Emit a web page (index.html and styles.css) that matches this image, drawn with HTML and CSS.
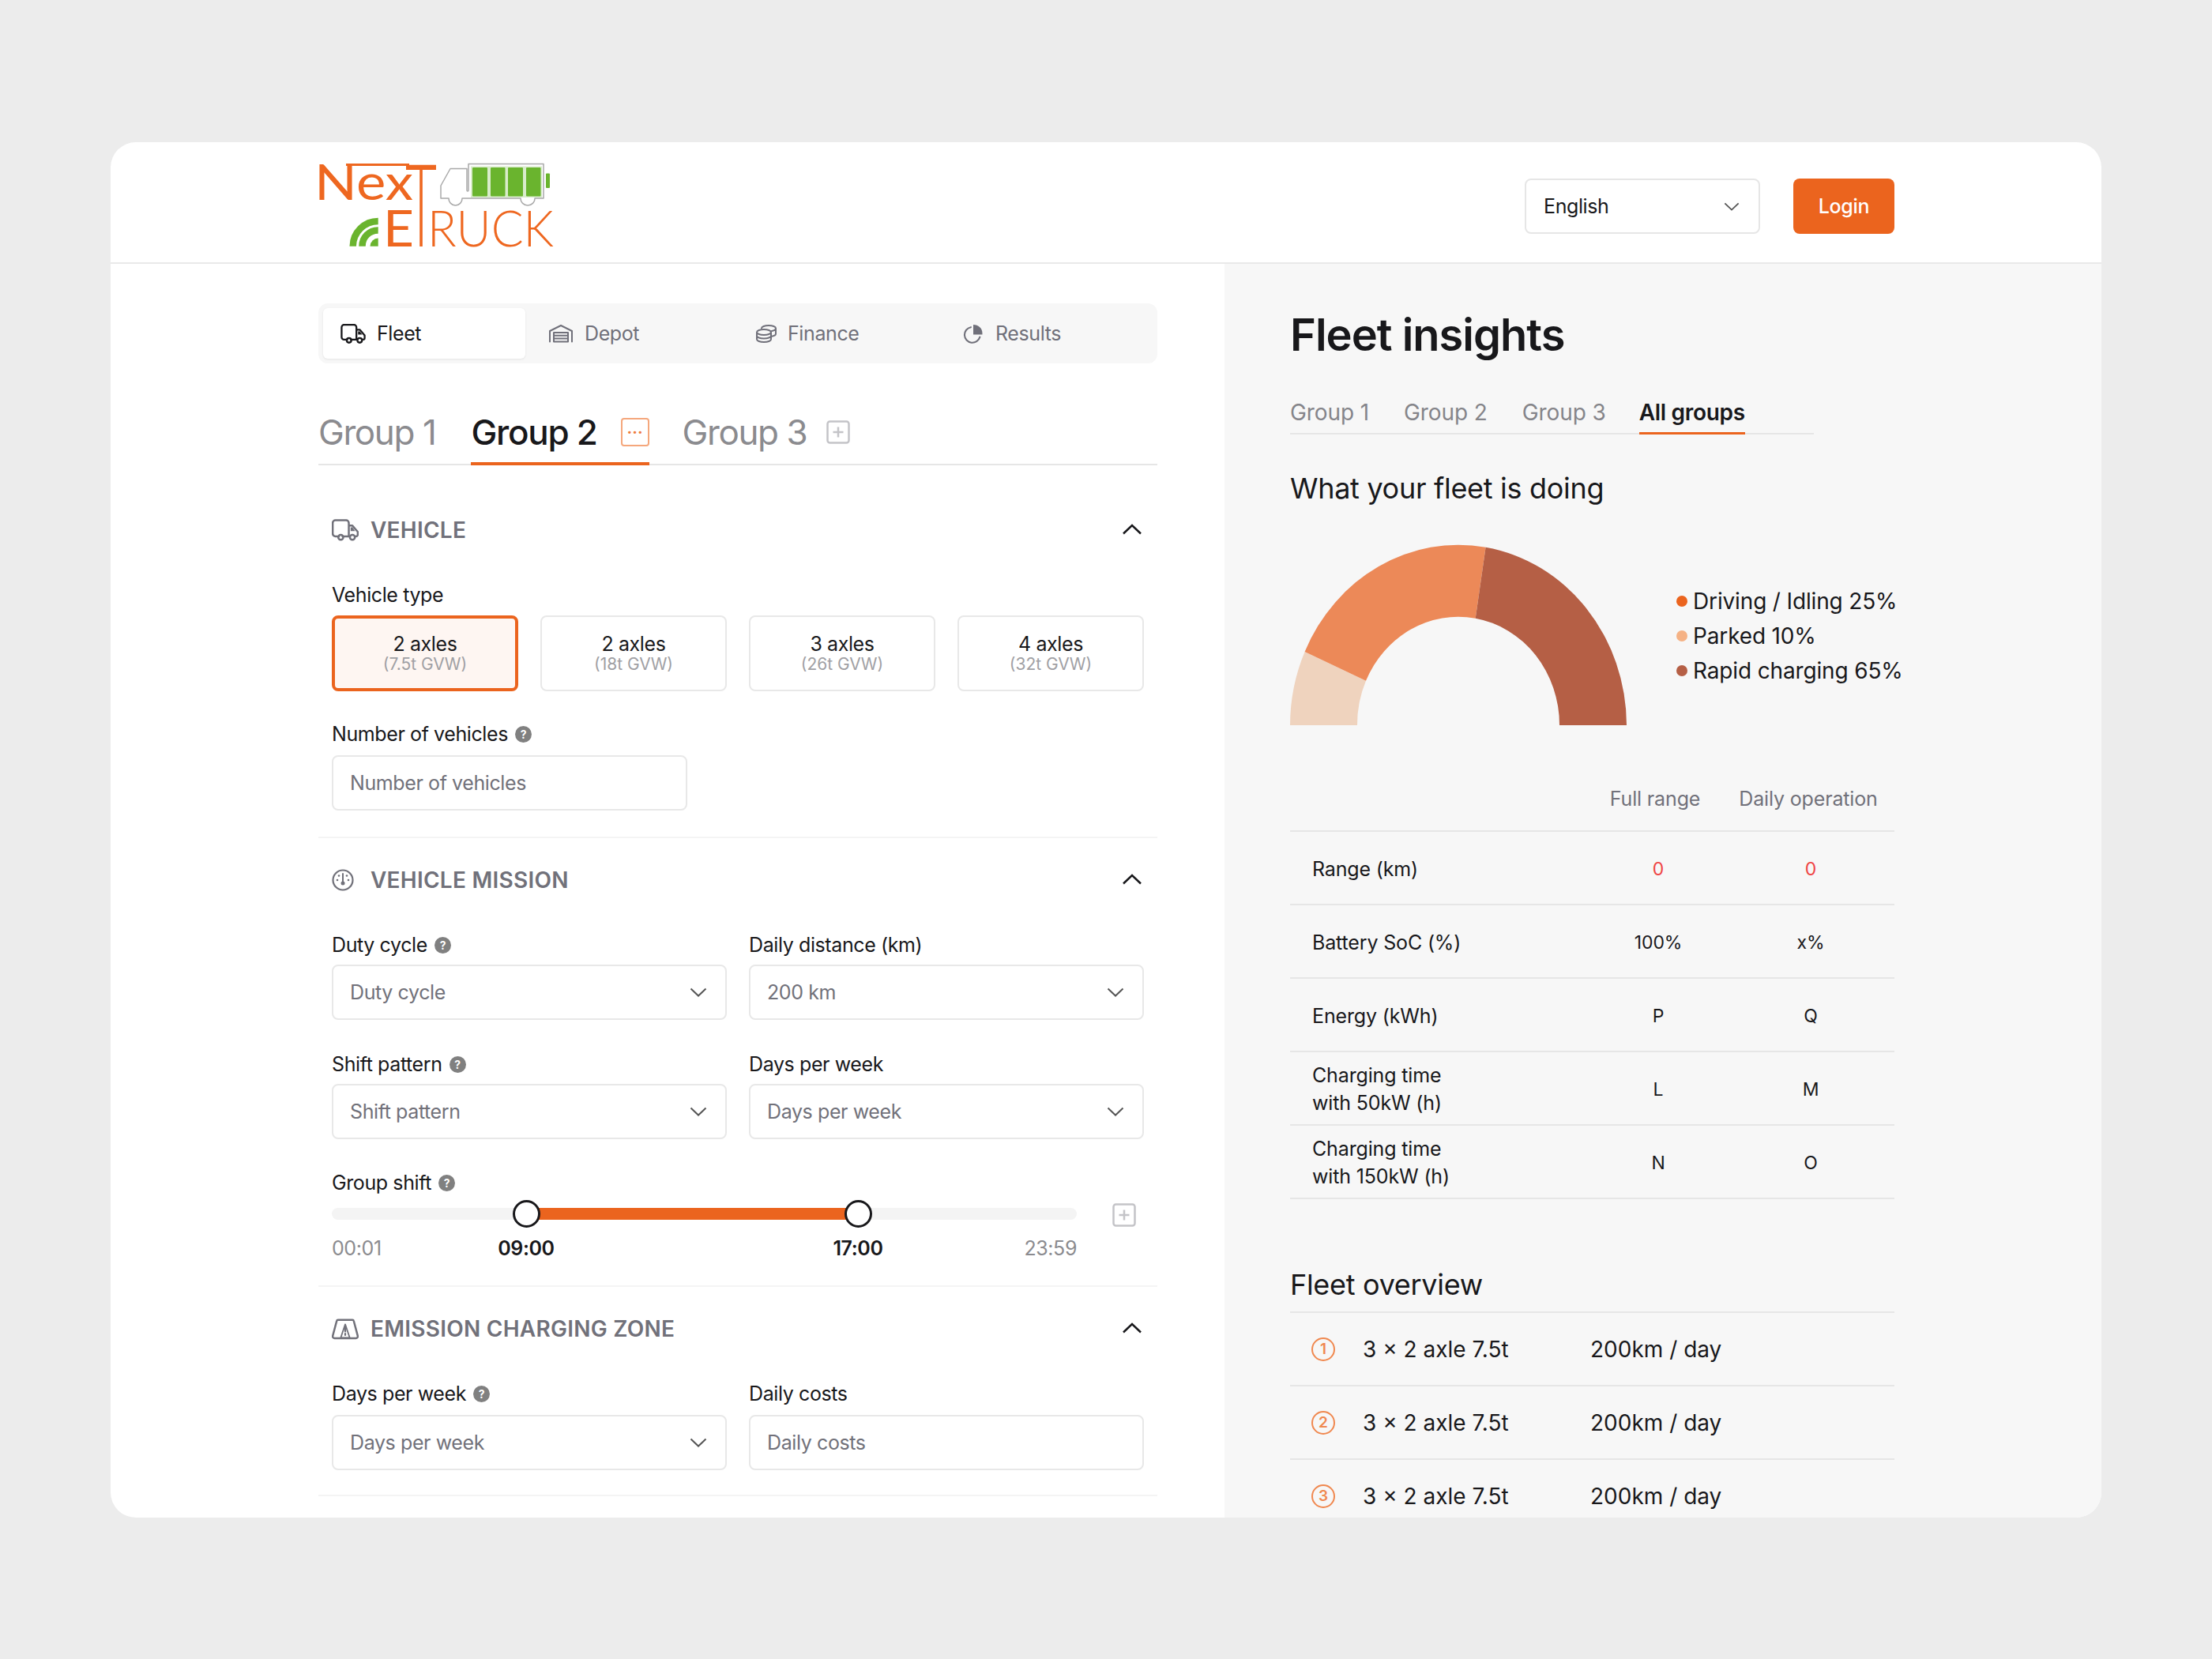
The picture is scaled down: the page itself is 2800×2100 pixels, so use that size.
FILE: index.html
```html
<!DOCTYPE html>
<html>
<head>
  <meta charset="utf-8" />
  <title>Next E-Truck</title>
  <link rel="stylesheet" href="styles.css">
</head>
<body>
  <svg class="sprites" width="0" height="0">
    <symbol id="truck" viewBox="0 0 30 24">
      <path d="M8 19H4a3 3 0 0 1-3-3V4a3 3 0 0 1 3-3h12a3 3 0 0 1 3 3v15h-7M19 7h4l6 7v3a2 2 0 0 1-2 2h-1M20 19h-1" fill="none" stroke="currentColor" stroke-width="2.200" stroke-linejoin="round" stroke-linecap="round"/>
      <path d="M21 9h2l3 4h-5z" fill="currentColor"/>
      <circle cx="10" cy="20" r="2.800" fill="none" stroke="currentColor" stroke-width="2.200"/>
      <circle cx="23" cy="20" r="2.800" fill="none" stroke="currentColor" stroke-width="2.200"/>
    </symbol>
    <symbol id="garage" viewBox="0 0 32 24">
      <path d="M2 22V8.500L16 1.500l14 7V22" fill="none" stroke="currentColor" stroke-width="2" stroke-linejoin="round" stroke-linecap="round"/>
      <path d="M7 10.500h18V22H7zM7 14.300h18M7 18.100h18" fill="none" stroke="currentColor" stroke-width="2" stroke-linejoin="round"/>
    </symbol>
    <symbol id="coins" viewBox="0 0 28 24">
      <ellipse cx="11" cy="10" rx="9" ry="3.500" fill="none" stroke="currentColor" stroke-width="2"/>
      <path d="M2 10v9c0 2 4 3.500 9 3.500s9-1.500 9-3.500v-9M2 14.500c0 2 4 3.500 9 3.500s9-1.500 9-3.500" fill="none" stroke="currentColor" stroke-width="2"/>
      <path d="M8 5c0-2 4-3.500 9-3.500s9 1.500 9 3.500v7c0 1.500-2 2.700-5 3.200M21 8.500c3-.5 5-1.700 5-3.500" fill="none" stroke="currentColor" stroke-width="2" stroke-linecap="round"/>
    </symbol>
    <symbol id="pie" viewBox="0 0 26 24">
      <path d="M10 4.500a9.500 9.500 0 1 0 11 12" fill="none" stroke="currentColor" stroke-width="2" stroke-linecap="round" transform="translate(0 -.5)"/>
      <path d="M13 1c6 0 11 4 11 10.500V13H13z" fill="currentColor"/>
    </symbol>
    <symbol id="gauge" viewBox="0 0 28 28">
      <circle cx="14" cy="14" r="12.500" fill="none" stroke="currentColor" stroke-width="2.200"/>
      <path d="M14 6v10" stroke="currentColor" stroke-width="2" stroke-linecap="round"/>
      <circle cx="14" cy="18" r="2.500" fill="currentColor"/>
      <circle cx="7" cy="14" r="1.300" fill="currentColor"/>
      <circle cx="21" cy="14" r="1.300" fill="currentColor"/>
      <circle cx="9" cy="8.500" r="1.300" fill="currentColor"/>
      <circle cx="19" cy="8.500" r="1.300" fill="currentColor"/>
    </symbol>
    <symbol id="zone" viewBox="0 0 30 24">
      <path d="M7 2h16a1.500 1.500 0 0 1 1.500 1.200L29 20a2 2 0 0 1-2 2.500H3A2 2 0 0 1 1 20L5.500 3.200A1.500 1.500 0 0 1 7 2z" fill="none" stroke="currentColor" stroke-width="2.200" stroke-linejoin="round"/>
      <path d="M15 7l-5 15h10z" fill="none" stroke="currentColor" stroke-width="1.600" stroke-linejoin="round"/>
      <path d="M15 10v5M15 17.500v1.500" stroke="currentColor" stroke-width="2" stroke-linecap="round"/>
    </symbol>
    <symbol id="plus" viewBox="0 0 30 30">
      <rect x="1.500" y="1.500" width="27" height="27" rx="3" fill="none" stroke="currentColor" stroke-width="2.500"/>
      <path d="M15 8.500v13M8.500 15h13" stroke="currentColor" stroke-width="2.500"/>
    </symbol>
    <symbol id="chev-down" viewBox="0 0 22 12">
      <path d="M1.500 1.500L11 10.500l9.500-9" fill="none" stroke="currentColor" stroke-width="2"/>
    </symbol>
    <symbol id="chev-up" viewBox="0 0 26 14">
      <path d="M2 12.500L13 2l11 10.500" fill="none" stroke="currentColor" stroke-width="2.500"/>
    </symbol>
  </svg>

  <div class="app">
    <header class="topbar">
      <svg class="logo" viewBox="0 0 300 112" width="300" height="112">
        <g class="logo-orange">
          <text x="-4" y="48" font-size="62" textLength="125" lengthAdjust="spacingAndGlyphs">Nex</text>
          <rect x="36" y="2" width="80" height="3"/>
          <text class="logo-t" x="111" y="107" font-size="146" textLength="40" lengthAdjust="spacingAndGlyphs">T</text>
          <text x="83" y="107" font-size="64" textLength="39" lengthAdjust="spacingAndGlyphs">E</text>
          <text class="logo-truck" x="139" y="107" font-size="63" textLength="160" lengthAdjust="spacingAndGlyphs">RUCK</text>
        </g>
        <path d="M189 36V8.500H168L156 30V46H166a8.500 9 0 0 0 17 0H257a9 9 0 0 0 18 0H286V2.500H191V36a1 1 0 0 1-2 0z" fill="#fff" stroke="#a9a9a9" stroke-width="1.500" stroke-linejoin="round"/>
        <rect x="194" y="5.500" width="90" height="39.500" fill="#d9eccb"/>
        <rect x="196" y="7" width="19" height="36.500" rx="1" fill="#6ab42e"/>
        <rect x="219" y="7" width="18.500" height="36.500" rx="1" fill="#6ab42e"/>
        <rect x="241" y="7" width="19" height="36.500" rx="1" fill="#6ab42e"/>
        <rect x="264" y="7" width="18.500" height="36.500" rx="1" fill="#6ab42e"/>
        <rect x="289" y="14.500" width="5" height="18.500" rx="1" fill="#6ab42e"/>
        <path d="M44.700 106.700A32 32 0 0 1 76.700 75M56.500 106.700A20 20 0 0 1 76.700 86.500" fill="none" stroke="#6ab42e" stroke-width="8.500"/>
        <path d="M66.500 106.700a10.500 10.500 0 0 1 10.200-10.200v10.200z" fill="#6ab42e"/>
      </svg>
      <div class="top-actions">
        <div class="lang">English <svg class="lang-chev"><use href="#chev-down"/></svg></div>
        <button class="login">Login</button>
      </div>
    </header>

    <div class="columns">
      <main class="form-col">
        <nav class="steps">
          <a class="step active"><svg class="step-icon"><use href="#truck"/></svg>Fleet</a>
          <a class="step"><svg class="step-icon wide"><use href="#garage"/></svg>Depot</a>
          <a class="step"><svg class="step-icon coin"><use href="#coins"/></svg>Finance</a>
          <a class="step"><svg class="step-icon result"><use href="#pie"/></svg>Results</a>
        </nav>

        <div class="group-tabs">
          <a class="group-tab">Group 1</a>
          <a class="group-tab current">Group 2 <span class="more">···</span></a>
          <a class="group-tab">Group 3 <svg class="add"><use href="#plus"/></svg></a>
        </div>

        <section class="panel first">
          <div class="panel-head">
            <h2><svg class="head-icon"><use href="#truck"/></svg>VEHICLE</h2>
            <svg class="collapse"><use href="#chev-up"/></svg>
          </div>
          <div class="label">Vehicle type</div>
          <div class="axles">
            <div class="axle selected">2 axles<small>(7.5t GVW)</small></div>
            <div class="axle">2 axles<small>(18t GVW)</small></div>
            <div class="axle">3 axles<small>(26t GVW)</small></div>
            <div class="axle">4 axles<small>(32t GVW)</small></div>
          </div>
          <div class="label gap-top">Number of vehicles <i class="help">?</i></div>
          <div class="field half">Number of vehicles</div>
        </section>

        <section class="panel">
          <div class="panel-head">
            <h2><svg class="head-icon round"><use href="#gauge"/></svg>VEHICLE MISSION</h2>
            <svg class="collapse"><use href="#chev-up"/></svg>
          </div>
          <div class="fields">
            <div>
              <div class="label">Duty cycle <i class="help">?</i></div>
              <div class="field">Duty cycle <svg class="chev"><use href="#chev-down"/></svg></div>
            </div>
            <div>
              <div class="label">Daily distance (km)</div>
              <div class="field">200 km <svg class="chev"><use href="#chev-down"/></svg></div>
            </div>
            <div>
              <div class="label">Shift pattern <i class="help">?</i></div>
              <div class="field">Shift pattern <svg class="chev"><use href="#chev-down"/></svg></div>
            </div>
            <div>
              <div class="label">Days per week</div>
              <div class="field">Days per week <svg class="chev"><use href="#chev-down"/></svg></div>
            </div>
          </div>
          <div class="label shift-label">Group shift <i class="help">?</i></div>
          <div class="slider-row">
            <div class="slider">
              <div class="track"><div class="range"></div></div>
              <span class="knob from"></span>
              <span class="knob to"></span>
              <div class="times">
                <span>00:01</span>
                <b class="from">09:00</b>
                <b class="to">17:00</b>
                <span>23:59</span>
              </div>
            </div>
            <svg class="add slider-add"><use href="#plus"/></svg>
          </div>
        </section>

        <section class="panel zone">
          <div class="panel-head">
            <h2><svg class="head-icon"><use href="#zone"/></svg>EMISSION CHARGING ZONE</h2>
            <svg class="collapse"><use href="#chev-up"/></svg>
          </div>
          <div class="fields">
            <div>
              <div class="label">Days per week <i class="help">?</i></div>
              <div class="field">Days per week <svg class="chev"><use href="#chev-down"/></svg></div>
            </div>
            <div>
              <div class="label">Daily costs</div>
              <div class="field">Daily costs</div>
            </div>
          </div>
        </section>
      </main>

      <aside class="insights">
        <h1>Fleet insights</h1>
        <div class="insight-tabs">
          <a>Group 1</a>
          <a>Group 2</a>
          <a>Group 3</a>
          <a class="current">All groups</a>
        </div>

        <h3 class="doing">What your fleet is doing</h3>
        <div class="chart-row">
          <svg class="donut" viewBox="0 0 426 229" width="426" height="229">
            <path d="M0 229A213 229 0 0 1 18.600 136L96 172.700A128 137 0 0 0 85 229Z" fill="#efd3be"/>
            <path d="M18.600 136A213 229 0 0 1 247.600 3.700L234.700 93.700A128 137 0 0 0 96 172.700Z" fill="#ec8958"/>
            <path d="M247.600 3.700A213 229 0 0 1 426 229H341A128 137 0 0 0 234.700 93.700Z" fill="#b55f45"/>
          </svg>
          <ul class="legend">
            <li><i class="dot driving"></i>Driving / Idling 25%</li>
            <li><i class="dot parked"></i>Parked 10%</li>
            <li><i class="dot rapid"></i>Rapid charging 65%</li>
          </ul>
        </div>

        <div class="stats">
          <div class="stat head"><span></span><span>Full range</span><span>Daily operation</span></div>
          <div class="stat"><span>Range (km)</span><span class="zero">0</span><span class="zero">0</span></div>
          <div class="stat"><span>Battery SoC (%)</span><span>100%</span><span>x%</span></div>
          <div class="stat"><span>Energy (kWh)</span><span>P</span><span>Q</span></div>
          <div class="stat"><span>Charging time<br>with 50kW (h)</span><span>L</span><span>M</span></div>
          <div class="stat"><span>Charging time<br>with 150kW (h)</span><span>N</span><span>O</span></div>
        </div>

        <h3 class="overview-title">Fleet overview</h3>
        <div class="overview">
          <div class="ov-row"><i class="num">1</i><span class="ov-type">3 × 2 axle 7.5t</span><span>200km / day</span></div>
          <div class="ov-row"><i class="num">2</i><span class="ov-type">3 × 2 axle 7.5t</span><span>200km / day</span></div>
          <div class="ov-row"><i class="num">3</i><span class="ov-type">3 × 2 axle 7.5t</span><span>200km / day</span></div>
        </div>
      </aside>
    </div>
  </div>
</body>
</html>
```

FILE: styles.css
```css
* { margin: 0; padding: 0; box-sizing: border-box; }
body { background: #ececec; font-family: Inter, "Liberation Sans", sans-serif; color: #18181b; letter-spacing: -0.4px; }
.sprites { position: absolute; }

.app { width: 2520px; height: 1741px; margin: 180px 0 0 140px; background: #fff; border-radius: 32px; overflow: hidden; display: flex; flex-direction: column; }

/* header */
.topbar { flex: none; height: 154px; padding: 10px 262px 0; border-bottom: 2px solid #e9e9e9; display: flex; align-items: center; justify-content: space-between; }
.logo { display: block; overflow: visible; }
.logo-orange { fill: #ee6720; font-family: Lato, sans-serif; font-weight: 400; letter-spacing: 0; }
.logo-t, .logo-truck { font-weight: 300; }
.top-actions { display: flex; gap: 42px; }
.lang { width: 298px; height: 70px; padding: 0 22px; border: 2px solid #e6e6e6; border-radius: 8px; display: flex; align-items: center; justify-content: space-between; font-size: 25px; }
.lang-chev { width: 20px; height: 11px; color: #555; margin-right: 2px; }
.login { width: 128px; height: 70px; border: 0; border-radius: 8px; background: #eb641e; color: #fff; font: 500 25px Inter, sans-serif; letter-spacing: -0.3px; }

.columns { flex: 1; display: flex; min-height: 0; }
.form-col { width: 1410px; flex: none; padding: 50px 85px 0 263px; }
.insights { flex: 1; background: #f7f7f7; padding: 56px 0 0 83px; }

/* step nav */
.steps { height: 76px; padding: 6px; background: #f7f7f7; border-radius: 12px; display: flex; }
.step { width: 263px; display: flex; align-items: center; gap: 14px; padding-left: 21px; font-size: 25px; color: #70707a; }
.step.active { width: 257px; margin-right: 8px; padding-left: 22px; background: #fff; border-radius: 6px; color: #18181b; box-shadow: 0 1px 3px rgba(0,0,0,.08); }
.step-icon { width: 32px; height: 25px; }
.step-icon.wide { margin-right: 0; }
.step-icon.coin { width: 28px; margin-right: -1px; }
.step-icon.result { width: 28px; }

/* group tabs */
.group-tabs { margin-top: 50px; height: 79px; border-bottom: 2px solid #e6e6e6; display: flex; gap: 45px; }
.group-tab { height: 79px; display: flex; align-items: center; gap: 30px; padding-bottom: 5px; font-size: 44px; letter-spacing: -1.4px; color: #8b8b8f; }
.group-tab.current { color: #18181b; font-weight: 500; border-bottom: 4px solid #eb641e; padding-bottom: 1px; letter-spacing: -1.3px; }
.group-tab:last-child { margin-left: -3px; }
.more { width: 36px; height: 36px; border: 2px solid #f5a77c; border-radius: 4px; color: #ee7a3c; font-size: 20px; font-weight: 700; letter-spacing: 0; display: flex; align-items: center; justify-content: center; }
.add { width: 30px; height: 30px; color: #c4c4c8; }
.group-tab .add { margin-left: -5px; }

/* form sections */
.panel { padding: 33px 18px 33px 17px; border-bottom: 2px solid #f4f4f4; }
.panel.first { padding-top: 62px; }
.panel-head { height: 40px; margin-bottom: 47px; display: flex; align-items: center; justify-content: space-between; }
.panel-head h2 { display: flex; align-items: center; gap: 15px; font-size: 28px; font-weight: 600; letter-spacing: 0.25px; color: #71717a; }
.head-icon { width: 34px; height: 28px; }
.head-icon.round { margin-left: -3px; margin-right: 3px; }
.collapse { width: 26px; height: 14px; margin: 0 1px 3px 0; color: #18181b; }

.label { height: 30px; margin-bottom: 11px; display: flex; align-items: center; gap: 9px; font-size: 25px; }
.label.gap-top { margin-top: 39px; margin-bottom: 12px; }
.help { width: 21px; height: 21px; border-radius: 50%; background: #808080; color: #fff; font: 700 14px/21px Inter, sans-serif; text-align: center; }

.axles { display: grid; grid-template-columns: repeat(4, 236px); column-gap: 28px; }
.axle { height: 96px; border: 2px solid #e8e8e8; border-radius: 8px; display: flex; flex-direction: column; align-items: center; justify-content: center; font-size: 25px; line-height: 28px; }
.axle small { font-size: 21px; line-height: 24px; letter-spacing: 0; color: #a0a0a4; }
.axle.selected { border: 4px solid #eb641e; background: #fef6f2; }

.field { height: 70px; padding: 0 21px; border: 2px solid #e8e8e8; border-radius: 8px; display: flex; align-items: center; justify-content: space-between; font-size: 25px; color: #71717a; }
.field.half { width: 450px; }
.chev { width: 22px; height: 12px; margin-right: 2px; color: #555; }
.fields { display: grid; grid-template-columns: 500px 500px; gap: 41px 28px; }
.fields .label { margin-bottom: 10px; }
.panel.zone { padding-top: 33px; padding-bottom: 31px; }
.panel.zone .fields .label { margin-bottom: 12px; }

/* shift slider */
.shift-label { margin-top: 40px; margin-bottom: 0; }
.slider-row { display: flex; justify-content: space-between; margin-bottom: -1px; }
.slider { position: relative; width: 943px; padding-top: 17px; }
.track { height: 15px; background: #f4f4f4; border-radius: 8px; position: relative; }
.range { position: absolute; left: 246px; width: 420px; top: 0; bottom: 0; background: #eb641e; }
.knob { position: absolute; top: 7px; width: 35px; height: 35px; margin-left: -17px; border: 3px solid #18181b; border-radius: 50%; background: #fff; }
.knob.from { left: 246px; }
.knob.to { left: 666px; }
.times { position: relative; height: 30px; margin-top: 21px; display: flex; justify-content: space-between; font-size: 25px; color: #8b8b8f; }
.times b { position: absolute; top: 0; transform: translateX(-50%); font-weight: 600; color: #18181b; }
.times b.from { left: 246px; }
.times b.to { left: 666px; }
.slider-add { margin: 11px 9px 0 0; }

/* right side */
.insights h1 { font-size: 56px; line-height: 68px; font-weight: 600; letter-spacing: -1px; }
.insight-tabs { width: 663px; margin-top: 47px; height: 45px; border-bottom: 2px solid #e6e6e6; display: flex; gap: 44px; letter-spacing: -0.1px; }
.insight-tabs a { height: 45px; font-size: 28px; line-height: 34px; color: #85858a; }
.insight-tabs a.current { margin-left: -2px; color: #18181b; font-weight: 600; letter-spacing: -0.3px; border-bottom: 3px solid #eb641e; }
.insights h3 { font-size: 36px; line-height: 46px; font-weight: 400; letter-spacing: -0.3px; }
.doing { margin-top: 45px; }
.chart-row { margin-top: 48px; display: flex; align-items: center; gap: 63px; }
.donut { display: block; }
.legend { list-style: none; margin-top: 3px; letter-spacing: -0.15px; }
.legend li { height: 44px; display: flex; align-items: center; gap: 7px; font-size: 28px; }
.dot { width: 14px; height: 14px; border-radius: 50%; }
.dot.driving { background: #eb641e; }
.dot.parked { background: #f5b285; }
.dot.rapid { background: #b55f45; }

.stats { width: 765px; margin-top: 53px; }
.stat { height: 93px; border-bottom: 2px solid #e6e6e6; display: grid; grid-template-columns: 370px 192px 194px; align-items: center; font-size: 25px; line-height: 35px; letter-spacing: -0.15px; }
.stat span { padding-top: 3px; }
.stat span:first-child { padding-left: 28px; }
.stat span + span { text-align: center; font-size: 23px; }
.stat.head { height: 82px; color: #71717a; }
.stat.head span { padding-top: 0; }
.stat.head span + span { font-size: 25px; padding-right: 6px; }
.stat.head span:nth-child(2) { padding-right: 8px; }
.zero { color: #ef4444; }

.overview-title { margin-top: 85px; margin-bottom: 11px; }
.overview { width: 765px; border-top: 2px solid #e6e6e6; }
.ov-row { height: 93px; border-bottom: 2px solid #e6e6e6; display: flex; align-items: center; font-size: 28px; letter-spacing: 0; }
.num { width: 30px; height: 30px; margin-left: 27px; margin-right: 35px; border: 2.500px solid #f0884f; border-radius: 50%; color: #f0884f; font: 600 19px/25px Inter, sans-serif; text-align: center; }
.ov-type { width: 288px; }
```
